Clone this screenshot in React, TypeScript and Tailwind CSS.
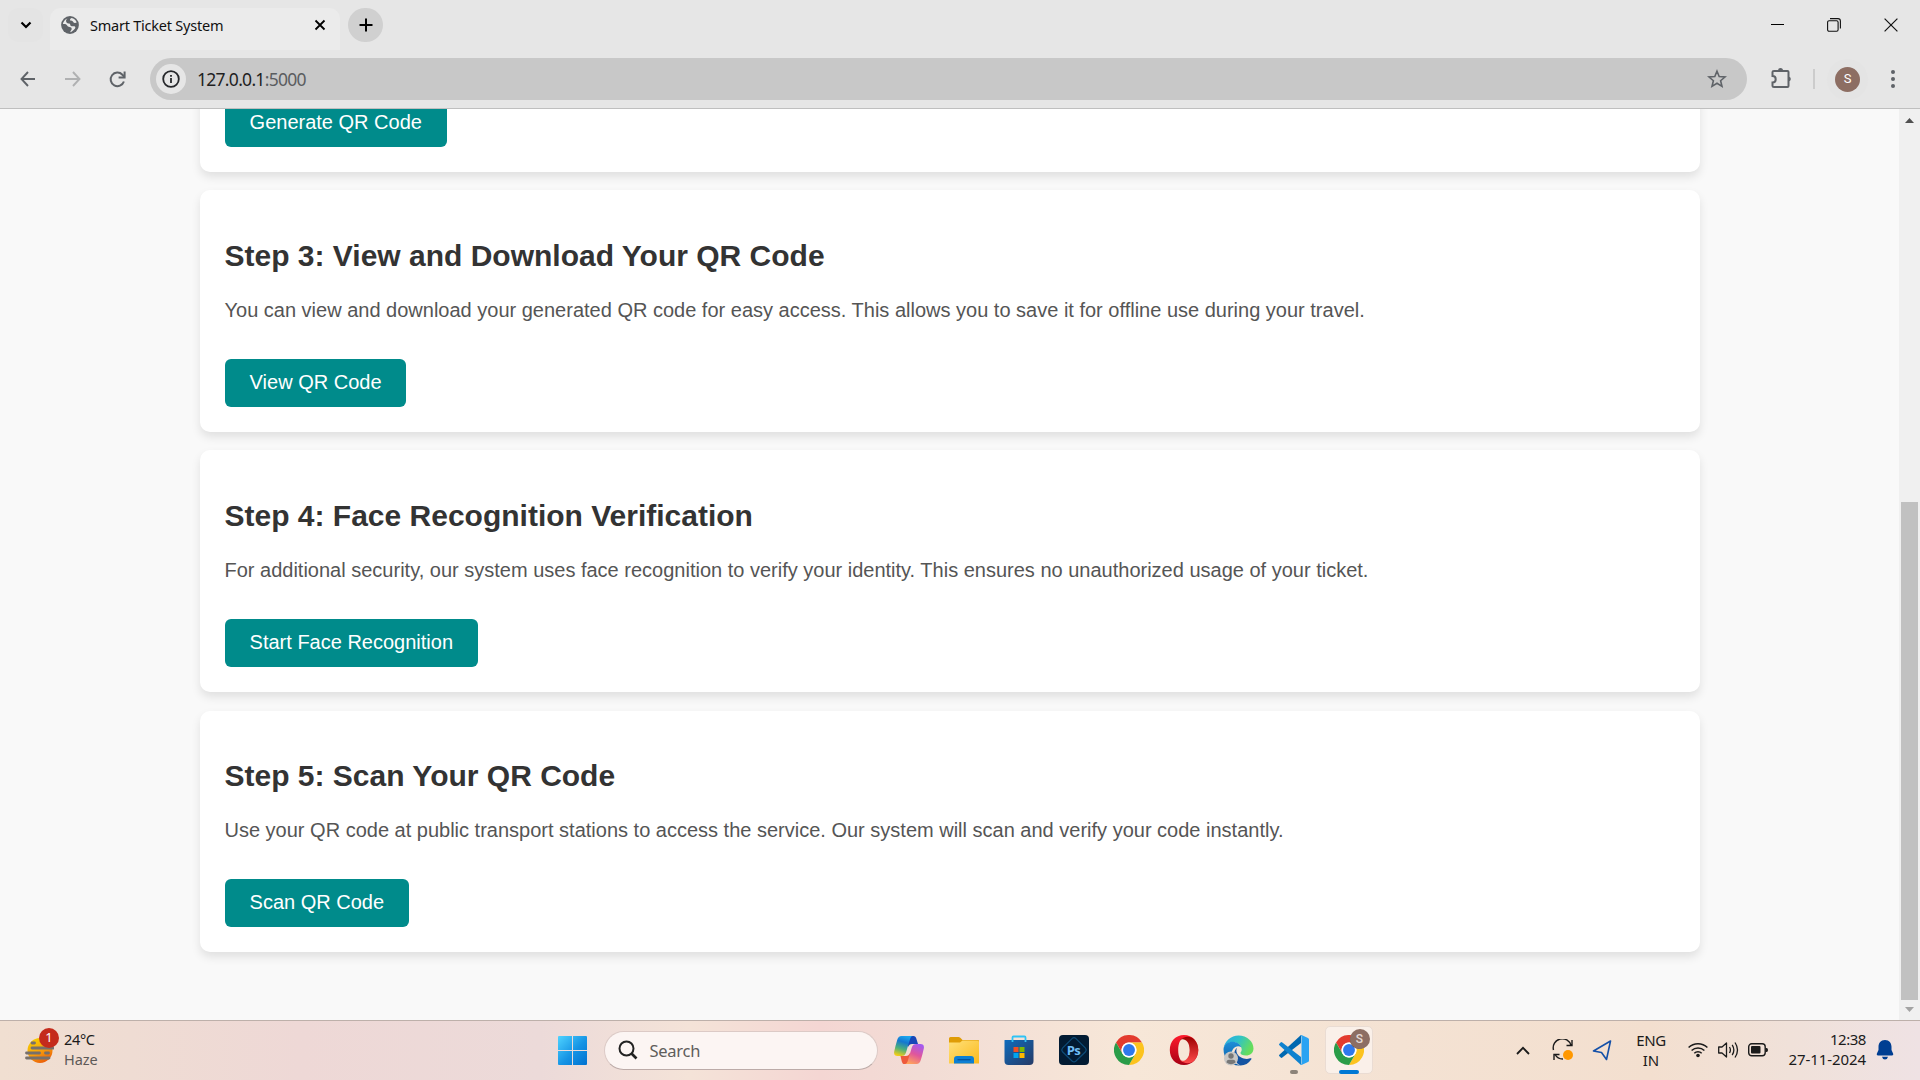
import React from "react";

type IconProps = { className?: string };

const Globe = () => (
  <svg width="18" height="18" viewBox="0 0 18 18" className="shrink-0">
    <circle cx="9" cy="9" r="8.9" fill="#5f6368" />
    <path d="M6.500 2.400C5.200 3.300 4.700 4.600 5.300 5.900 5.800 7 7 7.300 8.300 7.400 9 7.500 9.200 8.200 9.300 8.900 9.600 9.900 10.400 10.200 11.500 10.200H13.200C14.500 10.300 14.700 11.700 13.800 12.700 12.700 14 11 15.600 9.200 16.200 9.500 15 10.600 14.400 10.700 13.100 10.800 11.700 9.900 10.900 8.500 10.900 7.300 10.900 6.600 10.300 6 9.300 5.300 8.200 4 7.900 1.900 8.100 2.200 5.400 4 3.200 6.500 2.400Z" fill="#ebebeb" />
    <path d="M10.500 2.100C9.300 2.700 8.800 3.500 9.200 4.300 9.700 5.100 11.300 4.600 11.900 5.500 12.400 6.400 13 7.200 14.200 6.900L15.700 6.500C14.900 4.200 13 2.600 10.500 2.100Z" fill="#ebebeb" />
  </svg>
);

const ChromeLogo = ({ className }: IconProps) => (
  <svg width="30" height="30" viewBox="0 0 48 48" className={className}>
    <path d="M24 12H44.800A24 24 0 0 0 3.200 12L13.600 30A12 12 0 0 1 24 12Z" fill="#e33b2e" />
    <path d="M34.400 30 24 48A24 24 0 0 0 44.800 12H24A12 12 0 0 1 34.400 30Z" fill="#fcc31e" />
    <path d="M13.600 30 3.200 12A24 24 0 0 0 24 48L34.400 30A12 12 0 0 1 13.600 30Z" fill="#2a9c48" />
    <circle cx="24" cy="24" r="12" fill="#fff" />
    <circle cx="24" cy="24" r="9.500" fill="#2f78ec" />
  </svg>
);

const WindowsLogo = () => (
  <svg width="29" height="29" viewBox="0 0 29 29">
    <defs>
      <linearGradient id="win" x1="0" y1="0" x2="1" y2="1">
        <stop offset="0" stopColor="#4fd3ff" />
        <stop offset=".55" stopColor="#1593e4" />
        <stop offset="1" stopColor="#0071d0" />
      </linearGradient>
    </defs>
    <path d="M1 0h13v14H0V1a1 1 0 0 1 1-1ZM15 0h13a1 1 0 0 1 1 1v13H15ZM0 15h14v14H1a1 1 0 0 1-1-1ZM15 15h14v13a1 1 0 0 1-1 1H15Z" fill="url(#win)" />
  </svg>
);

const Copilot = () => (
  <svg width="30" height="28" viewBox="0 0 30 28">
    <defs>
      <linearGradient id="cpa" x1=".6" y1="0" x2=".3" y2="1">
        <stop offset="0" stopColor="#1ca7ee" />
        <stop offset=".3" stopColor="#1477d0" />
        <stop offset=".65" stopColor="#4db07a" />
        <stop offset="1" stopColor="#f2cd16" />
      </linearGradient>
      <linearGradient id="cpb" x1=".7" y1="0" x2=".3" y2="1">
        <stop offset="0" stopColor="#a35af0" />
        <stop offset=".5" stopColor="#e0569c" />
        <stop offset="1" stopColor="#ffa45c" />
      </linearGradient>
    </defs>
    <path d="M13 0h6.500c1.600 0 2.300 1 2.800 2.600L24 8h-6c-2 0-3 1-4 3Z" fill="#1747b8" />
    <path d="M17 28h-6.500c-1.600 0-2.200-1-2.700-2.600L6.500 20H12c2 0 3-1 4-3Z" fill="#ee5a3c" />
    <path d="M7.500 0H19c-1.800 0-2.500 1.500-3 3.300l-4 13.200C11.200 19 10 20 7.500 20H3.500C1 20-.4 18.500.2 15.500 1 11.500 2 8 3.200 4 4 1.200 5.300 0 7.500 0Z" fill="url(#cpa)" />
    <path d="M22.500 28H10.800c1.800 0 2.500-1.500 3-3.300l4-13.200C18.600 9 19.800 8 22.300 8h4.200c2.600 0 3.900 1.500 3.300 4.500-.8 4-1.800 7.500-3 11.500-.8 2.800-2.100 4-4.300 4Z" fill="url(#cpb)" />
  </svg>
);

const Folder = () => (
  <svg width="30" height="27" viewBox="0 0 30 27">
    <defs>
      <linearGradient id="fld" x1="0" y1="0" x2="1" y2="1">
        <stop offset="0" stopColor="#ffe07a" />
        <stop offset="1" stopColor="#fbba1c" />
      </linearGradient>
    </defs>
    <path d="M0 1.500Q0 0 1.500 0H9.500Q10.500 0 11.300.8L13.500 3H29Q30 3 30 4V8H0Z" fill="#df9c06" />
    <path d="M0 5.500H11L13.500 3.500H28.500Q30 3.500 30 5V26.500H0Z" fill="url(#fld)" />
    <path d="M5 26.500V22Q5 19 8 19H22Q25 19 25 22V26.500Z" fill="#0d7fd4" />
    <path d="M8.500 22.700H21.500" stroke="#07539c" strokeWidth="1.300" />
  </svg>
);

const Store = () => (
  <svg width="30" height="30" viewBox="0 0 30 30">
    <defs>
      <linearGradient id="sto" x1="0" y1="0" x2="1" y2="1">
        <stop offset="0" stopColor="#0f6cbd" />
        <stop offset="1" stopColor="#263a66" />
      </linearGradient>
    </defs>
    <path d="M.5 5.500Q.5 5 1 5H29Q29.500 5 29.500 5.500V26Q29.500 30 25.500 30H4.500Q.5 30 .5 26Z" fill="url(#sto)" />
    <path d="M8.500 7V2.500Q8.500 1.500 9.500 1.500H20.500Q21.500 1.500 21.500 2.500V7" fill="none" stroke="#2fc3f5" strokeWidth="1.800" />
    <path d="M9.500 12h5v5h-5z" fill="#f25022" />
    <path d="M15.500 12h5v5h-5z" fill="#7fba00" />
    <path d="M9.500 18h5v5h-5z" fill="#00a4ef" />
    <path d="M15.500 18h5v5h-5z" fill="#ffb900" />
  </svg>
);

const Photoshop = () => (
  <div className="relative flex size-[30px] items-center justify-center rounded-[4px] bg-[#021b33]">
    <svg width="30" height="30" viewBox="0 0 30 30" className="absolute inset-0">
      <path d="M15 2.700Q16 2.700 16.700 3.400L26.500 13.200Q28 15 26.500 16.800L16.700 26.300Q15 27.600 13.300 26.300L3.500 16.800Q2 15 3.500 13.200L13.300 3.400Q14 2.700 15 2.700Z" fill="none" stroke="#0d4b78" strokeWidth="1.200" />
    </svg>
    <span className="relative font-['Open_Sans',sans-serif] text-[13px] leading-none font-bold tracking-[-0.5px] text-[#6fbdf5]">Ps</span>
  </div>
);

const Opera = () => (
  <svg width="30" height="30" viewBox="0 0 30 30">
    <defs>
      <linearGradient id="opa" x1="0" y1="0" x2="0" y2="1">
        <stop offset="0" stopColor="#ff1b2d" />
        <stop offset="1" stopColor="#a70014" />
      </linearGradient>
      <linearGradient id="opb" x1="0" y1="0" x2="0" y2="1">
        <stop offset="0" stopColor="#9c0000" />
        <stop offset="1" stopColor="#ff4b4b" />
      </linearGradient>
    </defs>
    <path fillRule="evenodd" d="M15 0C6.500 0 .8 6.500.8 15S6.500 30 15 30 29.200 23.500 29.200 15 23.500 0 15 0ZM15 3.200C18.500 3.200 20.800 8 20.800 15S18.500 26.800 15 26.800 9.200 22 9.200 15 11.500 3.200 15 3.200Z" fill="url(#opa)" />
    <path d="M10.500 5.500C15 .5 22 1 25 4.200 31 10.500 30.500 20 25 25.800 22 29 15 29.500 10.500 24.500 14 28 20.800 24.500 20.800 15S14 2 10.500 5.500Z" fill="url(#opb)" />
  </svg>
);

const Edge = () => (
  <svg width="31" height="31" viewBox="0 0 31 31">
    <defs>
      <linearGradient id="eda" x1="0" y1="0" x2="1" y2=".4">
        <stop offset="0" stopColor="#2aa7e8" />
        <stop offset=".5" stopColor="#2fc2c8" />
        <stop offset="1" stopColor="#66dd5c" />
      </linearGradient>
      <linearGradient id="edb" x1="0" y1="0" x2="0" y2="1">
        <stop offset="0" stopColor="#1f8fd8" />
        <stop offset="1" stopColor="#0c59a4" />
      </linearGradient>
    </defs>
    <path d="M.5 14C1.500 6 8 .5 15.500.5 24 .5 30.500 6.500 30.500 13.500c0 4.500-3.500 7-7.500 7-3.500 0-5.500-1.200-5.500-2.500 0-1 1.200-1.500 1.200-3.500C18.700 10 14 7 9.500 7 5 7 1.500 10 .5 14Z" fill="url(#eda)" />
    <path d="M.5 14C1.500 9 5 6.800 9.500 6.800c4 0 7.500 2.200 8.800 5.400-1-.7-2-1-3.200-1-4 0-6.600 4-6.600 8.300 0 5.300 4 10.500 9.500 11C8 31.500.5 24.500.5 14Z" fill="url(#edb)" />
    <path d="M11.200 19c0-2.500 1-4.600 2.900-6.200-.8 1.500-1 3-.3 5 1.500 4 6 6.200 10 6.200 2 0 3.200-.7 4-.7.7 0 .9.6.4 1.300-2.500 3.800-6.200 5.900-10.600 5.900-3.800-1.200-6.400-6.500-6.400-11.500Z" fill="#1454a2" />
    <circle cx="8" cy="23.500" r="7" fill="#c9c7c5" />
    <circle cx="8" cy="21" r="2.700" fill="#777" />
    <path d="M3.500 27.500Q3.500 24.800 6 24.800H10Q12.500 24.800 12.500 27.500Q8 31 3.500 27.500Z" fill="#777" />
  </svg>
);

const VSCode = () => (
  <svg width="30" height="30" viewBox="0 0 30 30">
    <path d="M22 0 22 8 3.300 22.600Q2.500 23.200 1.700 22.500L.4 21.300Q-.4 20.500.4 19.700Z" fill="#0068b0" />
    <path d="M22 30V22L3.300 7.400Q2.500 6.800 1.700 7.500L.4 8.700Q-.4 9.500.4 10.300Z" fill="#0f82cf" />
    <path d="M21.500.4 22.500 0 29 3Q30 3.500 30 4.500V25.500Q30 26.500 29 27L22.500 30 21.500 29.600Q22.500 29.500 22.500 28V2Q22.500.8 21.500.4Z" fill="#2aa3f2" />
  </svg>
);

const Haze = () => (
  <svg width="30" height="28" viewBox="0 0 30 28">
    <defs>
      <linearGradient id="haz" x1=".2" y1="0" x2=".7" y2="1">
        <stop offset="0" stopColor="#f6d000" />
        <stop offset=".5" stopColor="#f8a40c" />
        <stop offset="1" stopColor="#ea5a0a" />
      </linearGradient>
    </defs>
    <circle cx="16" cy="14.500" r="12.500" fill="url(#haz)" />
    <g stroke="#77706b" strokeWidth="2.800" strokeLinecap="round">
      <path d="M8 7H10.500M8 12H29.500M2.500 17H15.500M21.500 17H24.500M2.500 22H25" />
    </g>
  </svg>
);

const steps = [
  {
    title: "Step 3: View and Download Your QR Code",
    text: "You can view and download your generated QR code for easy access. This allows you to save it for offline use during your travel.",
    action: "View QR Code",
  },
  {
    title: "Step 4: Face Recognition Verification",
    text: "For additional security, our system uses face recognition to verify your identity. This ensures no unauthorized usage of your ticket.",
    action: "Start Face Recognition",
  },
  {
    title: "Step 5: Scan Your QR Code",
    text: "Use your QR code at public transport stations to access the service. Our system will scan and verify your code instantly.",
    action: "Scan QR Code",
  },
];

const ActionButton = ({ label }: { label: string }) => (
  <button className="block h-12 rounded-[6px] bg-[#008b8b] px-[24.6px] pb-[2px] text-[20px] leading-[23px] text-white">{label}</button>
);

const TabStrip = () => (
  <div className="flex h-[50px] items-start bg-[#e6e6e6] pt-2">
    <button className="ml-2 flex h-[34px] w-[35px] items-center justify-center rounded-[11px] bg-[#e4e4e4]">
      <svg width="12" height="8" viewBox="0 0 12 8" fill="none" stroke="#000" strokeWidth="2.200">
        <path d="M1.500 1.500 6 6 10.500 1.500" />
      </svg>
    </button>
    <div className="ml-[7px] flex h-[42px] w-[290px] items-center rounded-t-[11px] bg-[#ebebeb] pb-2 pl-[11px]">
      <Globe />
      <span className="ml-[11px] flex-1 pt-[2px] text-[14.500px] tracking-[-0.230px] whitespace-nowrap text-[#111]">Smart Ticket System</span>
      <svg width="12" height="12" viewBox="0 0 12 12" className="mr-[14px]" stroke="#000" strokeWidth="1.800">
        <path d="M1.500 1.500 10.500 10.500M10.500 1.500 1.500 10.500" />
      </svg>
    </div>
    <button className="ml-2 flex h-[34px] w-[35px] items-center justify-center rounded-full bg-[#d0d0d0]">
      <svg width="14" height="14" viewBox="0 0 14 14" stroke="#000" strokeWidth="2">
        <path d="M7 .5V13.500M.5 7H13.500" />
      </svg>
    </button>
    <div className="mt-[10px] mr-[22px] ml-auto flex items-center gap-[43px]">
      <svg width="13" height="14" viewBox="0 0 13 14" stroke="#000" strokeWidth="1">
        <path d="M0 6.500H13" />
      </svg>
      <svg width="14" height="14" viewBox="0 0 14 14" fill="none" stroke="#111" strokeWidth="1.100">
        <rect x=".6" y="2.800" width="10.500" height="10.500" rx="1.500" />
        <path d="M3 .6H11Q13.400.6 13.400 3V10.500" />
      </svg>
      <svg width="14" height="14" viewBox="0 0 14 14" stroke="#111" strokeWidth="1.200">
        <path d="M.6.6 13.400 13.400M13.400.6.6 13.400" />
      </svg>
    </div>
  </div>
);

const Toolbar = () => (
  <div className="flex h-[59px] items-start border-b border-[#bfbfbf] bg-[#e6e6e6] pt-2">
    <div className="flex h-[42px] items-center">
      <svg width="16" height="16" viewBox="0 0 16 16" className="ml-5" fill="none" stroke="#5f6368" strokeWidth="1.900">
        <path d="M15 8H1.500M8 1 1.500 8 8 15" />
      </svg>
      <svg width="16" height="16" viewBox="0 0 16 16" className="ml-[29px]" fill="none" stroke="#b0b1b2" strokeWidth="1.900">
        <path d="M0 8H14.500M8 1 14.500 8 8 15" />
      </svg>
      <svg width="17" height="17" viewBox="0 0 17 17" className="mr-px ml-[28px]" fill="none" stroke="#5f6368" strokeWidth="2">
        <path d="M14.900 10.500A6.800 6.800 0 1 1 13.400 3.700L15.500 6" />
        <path d="M15.600.5V6.500H9.600" />
      </svg>
    </div>
    <div className="ml-[23px] flex h-[42px] w-[1597px] items-center rounded-full bg-[#c8c8c8] pl-[6px]">
      <div className="flex size-[30px] items-center justify-center rounded-full bg-[#e6e6e6]">
        <svg width="18" height="18" viewBox="0 0 18 18" fill="none" stroke="#26282b" strokeWidth="1.800">
          <circle cx="9" cy="9" r="7.800" />
          <path d="M9 8V13M9 5V6.800" />
        </svg>
      </div>
      <span className="ml-[11px] flex-1 pt-px text-[17.500px] tracking-[-0.720px] text-[#1f1f1f]">
        127.0.0.1<span className="text-[#5b5d60]">:5000</span>
      </span>
      <svg width="20" height="20" viewBox="0 0 20 20" className="mr-5" fill="none" stroke="#5f6368" strokeWidth="1.600">
        <path d="M10 2.200 12.200 7.500 18 8 13.600 11.700 15 17.400 10 14.300 5 17.400 6.400 11.700 2 8 7.800 7.500Z" />
      </svg>
    </div>
    <div className="flex h-[42px] items-center">
      <svg width="22" height="22" viewBox="0 0 22 22" className="ml-6" fill="none" stroke="#5f6368" strokeWidth="2">
        <path d="M3 3H16.500Q17.500 3 17.500 4V18Q17.500 19 16.500 19H3Q1.500 19 1.500 18V14.500C3.500 14.500 4.700 13 4.700 11.200S3.500 8 1.500 8V4Q1.500 3 3 3Z" />
        <path d="M7 2.500A2.500 2.500 0 0 1 12 2.500ZM18 8.800A2.300 2.300 0 0 1 18 13.300Z" fill="#5f6368" stroke="none" />
      </svg>
      <div className="ml-[20px] h-5 w-[2px] bg-[#cccccc]" />
      <div className="ml-3 flex size-[41px] items-center justify-center rounded-full bg-[#e4e4e4]">
        <div className="flex size-[25px] items-center justify-center rounded-full bg-[#8d6e63] font-['Roboto',sans-serif] text-[13px] text-white">S</div>
      </div>
      <svg width="6" height="20" viewBox="0 0 6 20" className="ml-[21.500px]" fill="#5f6368">
        <circle cx="3" cy="3" r="2" />
        <circle cx="3" cy="10" r="2" />
        <circle cx="3" cy="17" r="2" />
      </svg>
    </div>
  </div>
);

const Slot = ({ children, mark }: { children: React.ReactNode; mark?: boolean }) => (
  <div className="relative flex h-[58px] w-[55px] items-center justify-center">
    {children}
    {mark && <span className="absolute bottom-[5px] h-1 w-2 rounded-full bg-[#8d8379]" />}
  </div>
);

const Taskbar = () => (
  <div className="flex h-[60px] items-center border-t border-[#bdb0aa] bg-[linear-gradient(90deg,#f0dfd1_0px,#efdcd3_130px,#eed8d6_300px,#ecdad9_540px,#f4e3d8_690px,#f4d6d3_820px,#f2dcd5_920px,#f7e7d8_1130px,#f4e2d3_1400px,#f3dfcf_1650px,#f0e1d9_1790px,#efe2e4_1920px)] pb-px text-[#1b1b1b]">
    <div className="relative ml-6">
      <Haze />
      <span className="absolute -top-[8px] left-[15px] flex size-5 items-center justify-center rounded-full bg-[#c42b1c] text-[13px] text-white">1</span>
    </div>
    <div className="mb-[2px] ml-[10px] w-[100px] text-[14.500px] leading-5">
      <div className="tracking-[-0.35px]">24°C</div>
      <div className="tracking-[-0.1px] text-[#5d5957]">Haze</div>
    </div>
    <div className="ml-[394px]">
      <WindowsLogo />
    </div>
    <div className="ml-[16.500px] flex h-[39px] w-[274px] items-center rounded-full border border-[#dccac6] border-b-[#bcaba8] bg-[#fcf5f3] pl-[13px]">
      <svg width="20" height="20" viewBox="0 0 20 20" fill="none" stroke="#222" strokeWidth="2">
        <circle cx="8.500" cy="8.500" r="7" />
        <path d="M13.500 13.500 18.500 18.500" strokeWidth="2.600" />
      </svg>
      <span className="ml-[12px] pt-[2px] text-[16.500px] tracking-[-0.250px] text-[#605d5b]">Search</span>
    </div>
    <div className="ml-[3.500px] flex">
      <Slot><Copilot /></Slot>
      <Slot><Folder /></Slot>
      <Slot><Store /></Slot>
      <Slot><Photoshop /></Slot>
      <Slot><ChromeLogo /></Slot>
      <Slot><Opera /></Slot>
      <Slot><Edge /></Slot>
      <Slot mark><VSCode /></Slot>
      <Slot>
        <div className="relative flex size-12 items-center justify-center rounded-[5px] border border-[#eadcd3] bg-[#faf0e9]">
          <ChromeLogo />
          <span className="absolute top-[4px] right-[4px] size-[18px] rounded-full bg-[#6f574e]" />
          <span className="absolute top-[2px] right-[2px] flex size-5 items-center justify-center rounded-full bg-[#8d6e63] font-['Roboto',sans-serif] text-[12px] font-medium text-[#e4dad6]">S</span>
          <span className="absolute -bottom-px h-1 w-5 rounded-full bg-[#0078d4]" />
        </div>
      </Slot>
    </div>
    <svg width="14" height="9" viewBox="0 0 14 9" className="ml-[140px]" fill="none" stroke="#1b1b1b" strokeWidth="1.800">
      <path d="M1 8 7 1.800 13 8" />
    </svg>
    <svg width="22" height="22" viewBox="0 0 22 22" className="ml-[22px]" fill="none" stroke="#1b1b1b" strokeWidth="1.400">
      <path d="M1.500 11A9 9 0 0 1 19 6.500M20 1V6.500H14.500M11 20A9 9 0 0 1 3 15.500M2 21V15.500H7.500" />
      <circle cx="16" cy="16" r="5" fill="#ff9800" stroke="none" />
    </svg>
    <svg width="20" height="21" viewBox="0 0 20 21" className="ml-[18px]" fill="none" stroke="#1450a8" strokeWidth="1.600" strokeLinejoin="round">
      <path d="M18.500 1 14.500 19.500 9.500 12.500 1.500 11Z" />
    </svg>
    <div className="mb-px ml-[19px] w-[40px] text-center text-[15px] leading-5">
      <div className="tracking-[-0.45px]">ENG</div>
      <div>IN</div>
    </div>
    <svg width="20" height="16" viewBox="0 0 20 16" className="ml-[17px]" fill="none" stroke="#1b1b1b" strokeWidth="1.500">
      <path d="M.6 5.500A13.500 13.500 0 0 1 19.400 5.500M3.600 8.500A9.200 9.200 0 0 1 16.400 8.500M6.300 11.200A5.300 5.300 0 0 1 13.700 11.200" />
      <circle cx="10" cy="13.500" r="1.800" fill="#1b1b1b" stroke="none" />
    </svg>
    <svg width="21" height="18" viewBox="0 0 21 18" className="ml-[10px]" fill="none" stroke="#1b1b1b" strokeWidth="1.300">
      <path d="M.7 6H4L8.500 2V16L4 12H.7Z" strokeLinejoin="round" />
      <path d="M11.500 6Q13.300 9 11.500 12M14.200 3.800Q17.500 9 14.200 14.200M17 1.500Q22 9 17 16.500" />
    </svg>
    <svg width="21" height="14" viewBox="0 0 21 14" className="ml-[9px]" fill="none" stroke="#1b1b1b" strokeWidth="1.400">
      <rect x=".7" y=".8" width="16.500" height="12" rx="3" />
      <rect x="3" y="3.100" width="9.500" height="7.500" rx="1" fill="#1b1b1b" stroke="none" />
      <path d="M17.500 5H18.500Q20 5 20 7T18.500 9H17.500Z" fill="#1b1b1b" stroke="none" />
    </svg>
    <div className="mb-[2px] ml-auto text-right text-[15px] leading-5">
      <div className="tracking-[-0.45px]">12:38</div>
      <div className="tracking-[-0.08px]">27-11-2024</div>
    </div>
    <svg width="18" height="20" viewBox="0 0 18 20" className="mr-[26px] ml-[10px]" fill="#003e92">
      <path d="M9 0C4.700 0 2.500 3 2.500 6.800V10L.8 13.800Q.3 15.500 2 15.500H16Q17.700 15.500 17.200 13.800L15.500 10V6.800C15.500 3 13.300 0 9 0ZM6 16.800H12Q11.500 19.500 9 19.500T6 16.800Z" />
    </svg>
  </div>
);

export default function App() {
  return (
    <div className="flex h-[1080px] w-[1920px] flex-col overflow-hidden font-['Noto_Sans',sans-serif]">
      <TabStrip />
      <Toolbar />
      <div className="flex h-[911px] bg-[#f9f9f9]">
        <main className="flex flex-1 flex-col overflow-hidden pl-[200px] font-['Liberation_Sans',Arial,sans-serif]">
          <section className="-mt-[20px] h-[83px] w-[1500px] shrink-0 rounded-[10px] bg-white px-[25px] pt-[10px] shadow-[0_5px_10px_rgba(0,0,0,0.1)]">
            <ActionButton label="Generate QR Code" />
          </section>
          {steps.map((s) => (
            <section key={s.title} className="mt-[18px] h-[242px] w-[1500px] shrink-0 rounded-[10px] bg-white px-[25px] pt-[49px] shadow-[0_5px_10px_rgba(0,0,0,0.1)] last:mt-[19px] last:h-[241px] last:pt-[48px]">
              <h2 className="-ml-[0.5px] text-[30px] leading-[34px] font-bold text-[#333]">{s.title}</h2>
              <p className="mt-[22px] mb-[34px] -ml-[0.5px] text-[20px] leading-[30px] text-[#555]">{s.text}</p>
              <ActionButton label={s.action} />
            </section>
          ))}
        </main>
        <div className="flex w-[21px] flex-col items-center bg-[#f0f0f0] pt-[9px] pb-[8px]">
          <svg width="9" height="5" viewBox="0 0 9 5" fill="#505050">
            <path d="M0 5 4.500 0 9 5Z" />
          </svg>
          <div className="mt-auto mb-[7px] h-[498px] w-[17px] bg-[#c1c1c1]" />
          <svg width="9" height="5" viewBox="0 0 9 5" fill="#a3a3a3">
            <path d="M0 0 4.500 5 9 0Z" />
          </svg>
        </div>
      </div>
      <Taskbar />
    </div>
  );
}
